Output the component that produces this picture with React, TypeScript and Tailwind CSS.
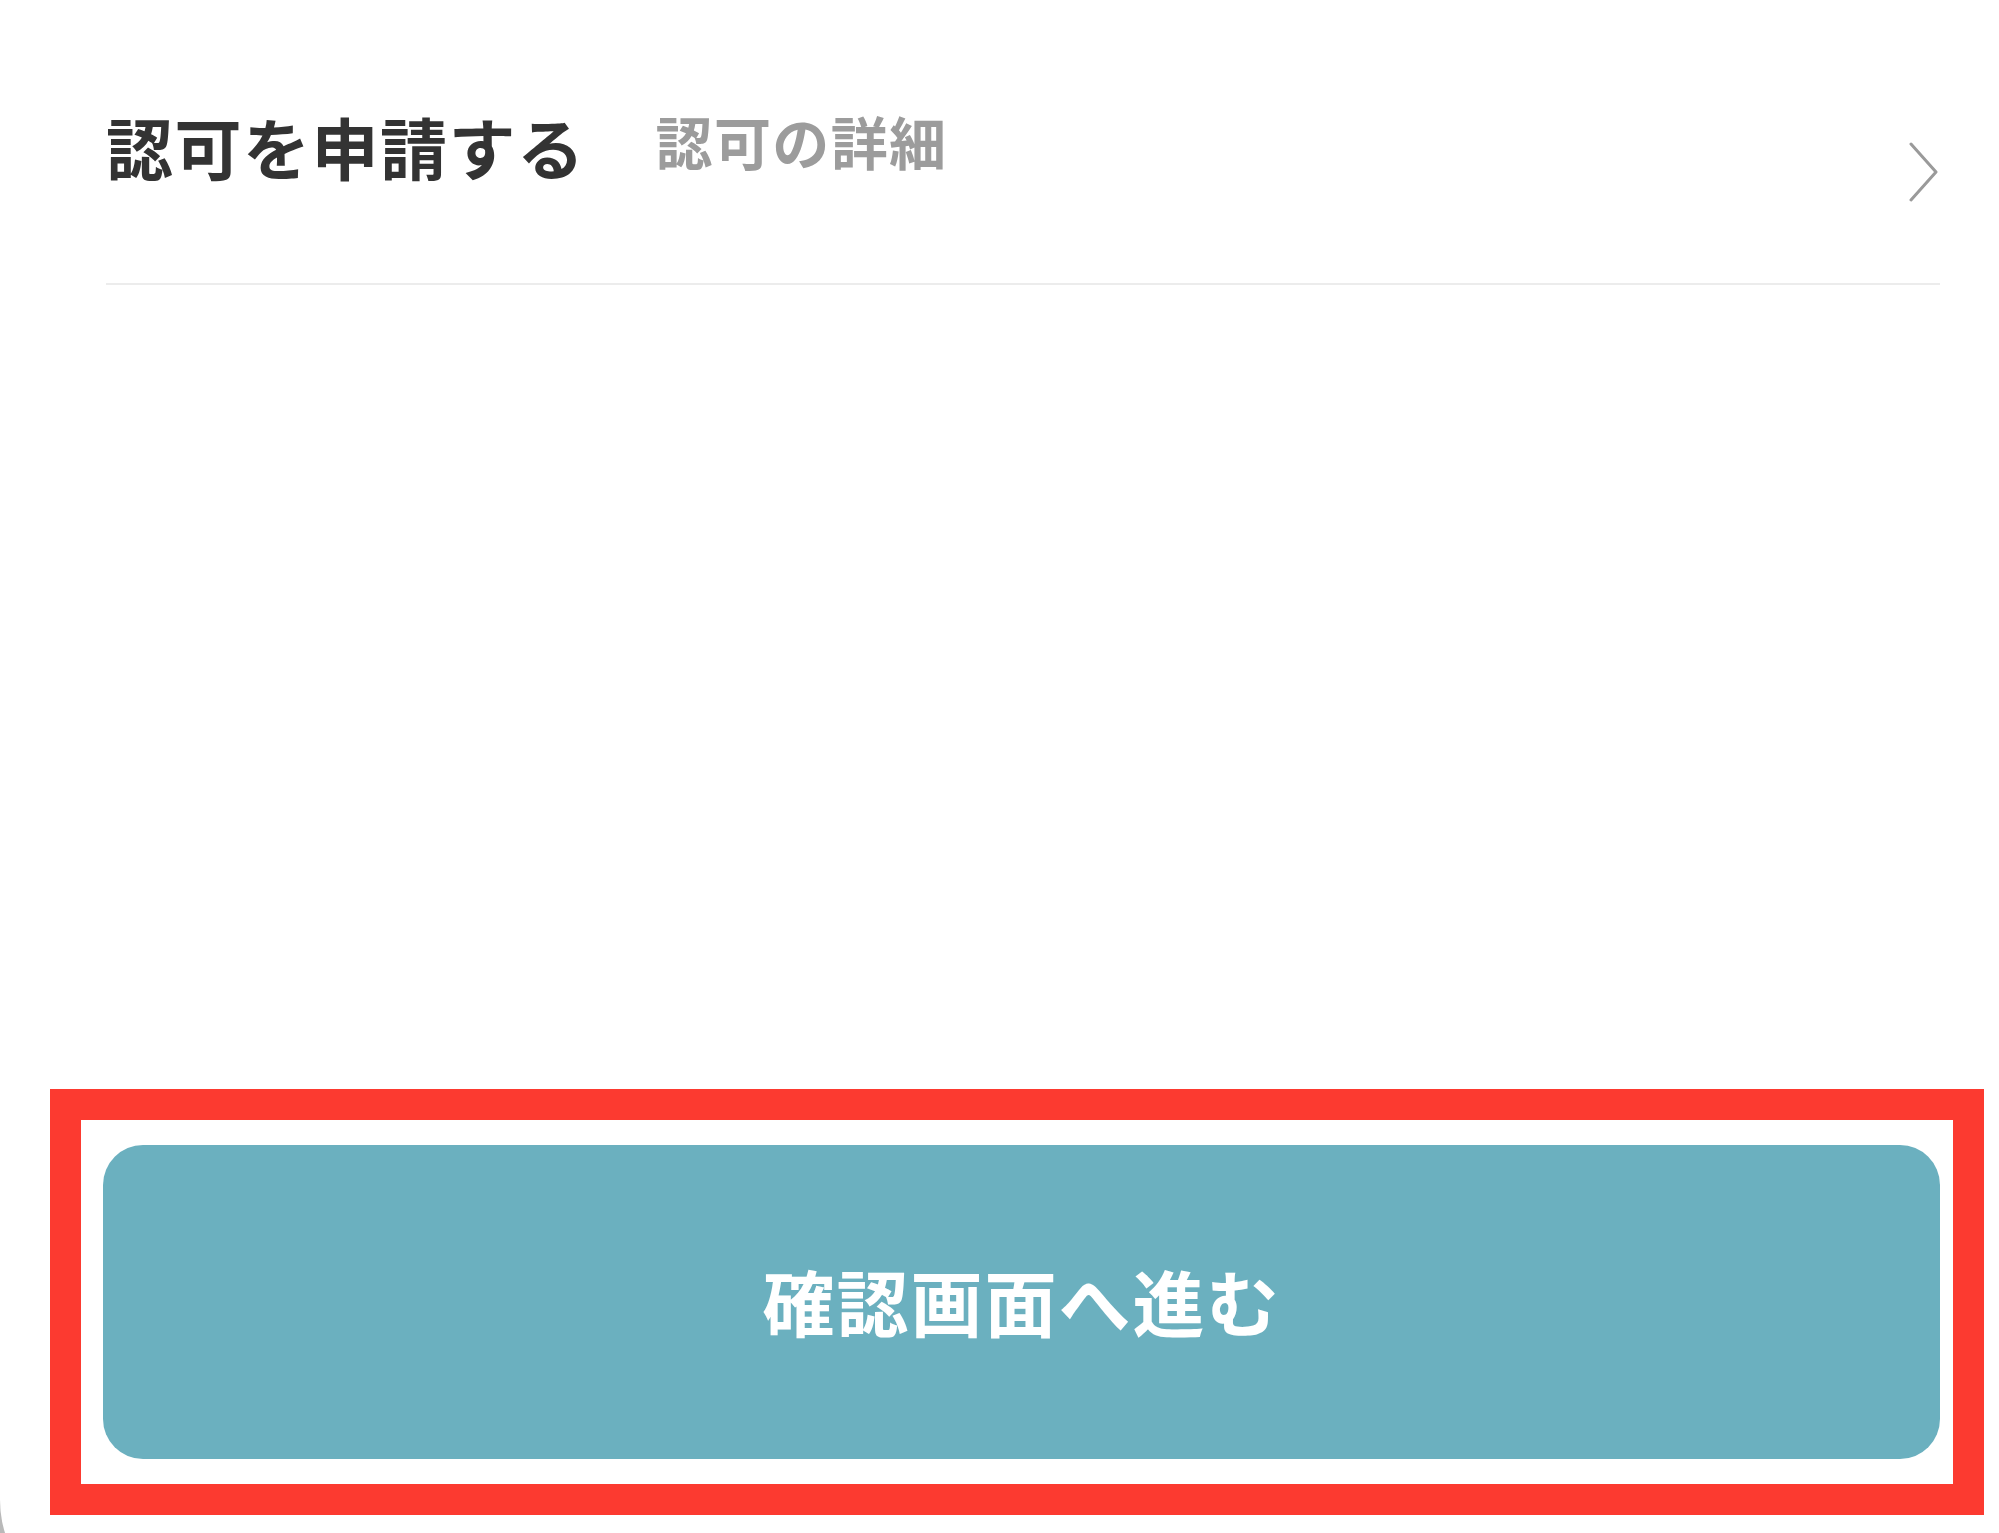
import React from "react";

export default function App() {
  const font = { fontFamily: '"Noto Sans CJK JP", "Noto Sans", sans-serif' };
  return (
    <div className="h-[1533px] w-full overflow-hidden bg-[#b9b9b9]" style={font}>
      <div className="h-[1611px] w-full rounded-bl-[111px] bg-white">
        <div className="flex h-[1533px] flex-col">
          <div className="ml-[106px] mr-[59px] flex h-[285px] items-start border-b-2 border-[#ececec] pt-[112px]">
            <span className="text-[67px] font-bold leading-none tracking-[1.5px] text-[#333333]">認可を申請する</span>
            <span className="ml-[70px] text-[57px] font-bold leading-none tracking-[1.4px] text-[#9c9c9c]">認可の詳細</span>
            <svg
              className="ml-auto mr-[1px] mt-[30px]"
              width="30"
              height="60"
              viewBox="0 0 30 60"
              fill="none"
            >
              <path d="M2 2 L27 30 L2 58" stroke="#9a9a9a" strokeWidth="3" strokeLinecap="round" strokeLinejoin="round" />
            </svg>
          </div>
          <div className="flex-1" />
          <div className="mb-[18px] ml-[50px] mr-[15px] border-[31px] border-[#fc3a30] pb-[25px] pl-[22px] pr-[13px] pt-[25px]">
            <button className="flex h-[314px] w-full items-center justify-center rounded-[40px] bg-[#6bb0bf] pb-[4px] text-[72px] font-bold leading-none tracking-[2px] text-white">
              確認画面へ進む
            </button>
          </div>
        </div>
      </div>
    </div>
  );
}
